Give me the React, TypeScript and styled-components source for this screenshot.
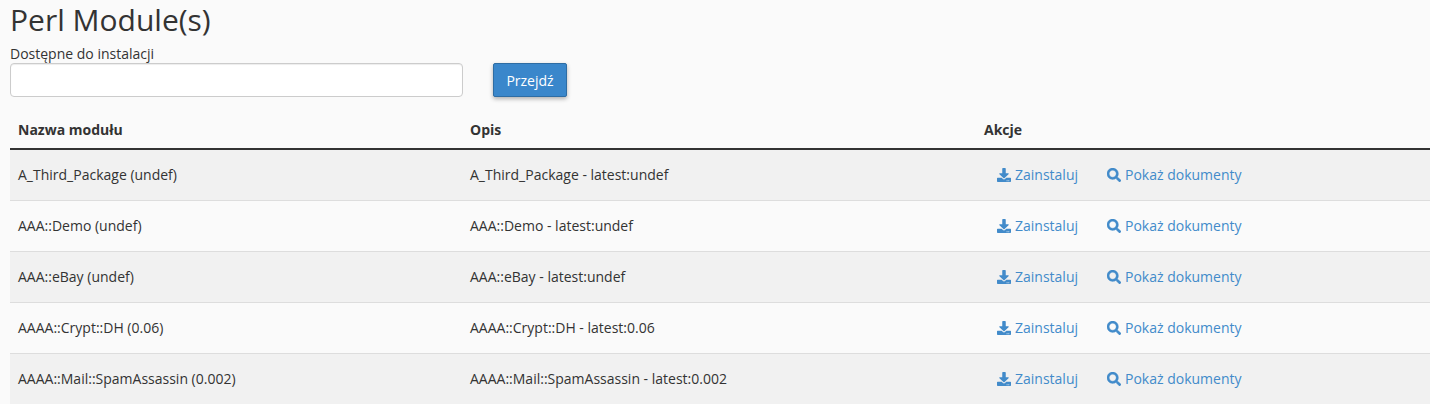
import { createGlobalStyle } from "styled-components";
import styled from "styled-components";
import { FaDownload, FaSearch } from "react-icons/fa";

const GlobalStyle = createGlobalStyle`
  html, body {
    margin: 0;
    padding: 0;
    background: #fafafa;
    overflow: hidden;
  }
  body {
    font-family: "Open Sans", sans-serif;
    font-size: 14px;
    line-height: 20px;
    color: #333;
  }
`;

const Page = styled.div`
  padding: 0 0 0 10px;
`;

const Title = styled.h1`
  font-size: 30px;
  font-weight: 400;
  line-height: 33px;
  margin: 0;
  padding-top: 3px;
  color: #333;
`;

const SearchForm = styled.form`
  margin-top: 9px;
  display: flex;
  align-items: flex-end;
  gap: 30px;
`;

const Field = styled.div`
  display: flex;
  flex-direction: column;
  width: 453px;
`;

const Label = styled.label`
  line-height: 17px;
  margin-bottom: 1px;
  color: #333;
`;

const Input = styled.input`
  height: 34px;
  box-sizing: border-box;
  border: 1px solid #ccc;
  border-radius: 4px;
  background: #fff;
  box-shadow: inset 0 1px 1px rgba(0, 0, 0, 0.075);
`;

const GoButton = styled.button`
  height: 34px;
  width: 74px;
  padding: 0;
  border: 1px solid #2e6da4;
  border-radius: 2px;
  background: #3a87cb;
  color: #fff;
  font-family: inherit;
  font-size: 14px;
  box-shadow: 0 2px 4px rgba(0, 0, 0, 0.3);
`;

const Table = styled.table`
  width: 1420px;
  margin-top: 14px;
  border-collapse: collapse;
  table-layout: fixed;
`;

const HeadCell = styled.th<{ $width: number }>`
  width: ${(props) => props.$width}px;
  box-sizing: border-box;
  height: 38px;
  padding: 8px;
  text-align: left;
  font-weight: 700;
  border-bottom: 2px solid #333;
`;

const Row = styled.tr<{ $odd: boolean }>`
  background: ${(props) => (props.$odd ? "#f1f1f1" : "#fafafa")};
`;

const Cell = styled.td`
  height: 51px;
  box-sizing: border-box;
  padding: 8px;
  border-bottom: 1px solid #ddd;
`;

const Actions = styled.div`
  display: flex;
  padding-left: 13px;
  gap: 29px;
`;

const ActionLink = styled.a`
  display: inline-flex;
  align-items: center;
  gap: 4px;
  color: #428bca;
  text-decoration: none;
  svg {
    width: 14px;
    height: 14px;
  }
`;

const BoldSearch = styled(FaSearch)`
  stroke: currentColor;
  stroke-width: 14;
`;

const modules = [
  { name: "A_Third_Package", version: "undef" },
  { name: "AAA::Demo", version: "undef" },
  { name: "AAA::eBay", version: "undef" },
  { name: "AAAA::Crypt::DH", version: "0.06" },
  { name: "AAAA::Mail::SpamAssassin", version: "0.002" },
];

export default function App() {
  return (
    <Page>
      <GlobalStyle />
      <Title>Perl Module(s)</Title>
      <SearchForm>
        <Field>
          <Label>Dostępne do instalacji</Label>
          <Input type="text" />
        </Field>
        <GoButton type="button">Przejdź</GoButton>
      </SearchForm>
      <Table>
        <thead>
          <tr>
            <HeadCell $width={452}>Nazwa modułu</HeadCell>
            <HeadCell $width={514}>Opis</HeadCell>
            <HeadCell $width={454}>Akcje</HeadCell>
          </tr>
        </thead>
        <tbody>
          {modules.map((m, i) => (
            <Row key={m.name} $odd={i % 2 === 0}>
              <Cell>
                {m.name} ({m.version})
              </Cell>
              <Cell>
                {m.name} - latest:{m.version}
              </Cell>
              <Cell>
                <Actions>
                  <ActionLink href="#">
                    <FaDownload />
                    Zainstaluj
                  </ActionLink>
                  <ActionLink href="#">
                    <BoldSearch />
                    Pokaż dokumenty
                  </ActionLink>
                </Actions>
              </Cell>
            </Row>
          ))}
        </tbody>
      </Table>
    </Page>
  );
}
